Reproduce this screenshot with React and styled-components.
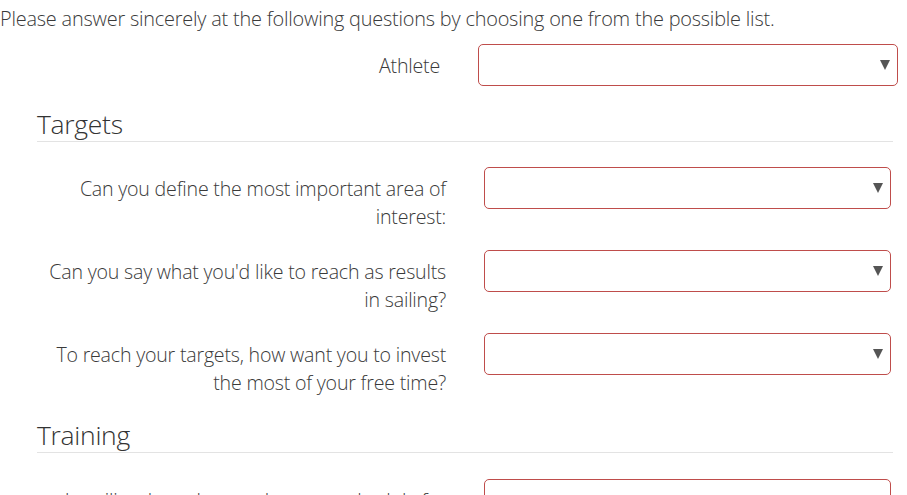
import React from "react";
import styled, { createGlobalStyle } from "styled-components";

const GlobalStyle = createGlobalStyle`
  body {
    margin: 0;
    background: #fff;
    font-family: "Open Sans", "Liberation Sans", sans-serif;
    font-weight: 300;
    color: #3a3a3a;
  }
`;

const Page = styled.div`
  width: 907px;
  height: 495px;
  overflow: hidden;
`;

const Intro = styled.p`
  margin: 0;
  padding-top: 6px;
  font-size: 19.9px;
  line-height: 26px;
  letter-spacing: -0.2px;
  white-space: nowrap;
`;

const FieldRow = styled.div`
  display: grid;
  grid-template-columns: ${(p) => p.labelWidth}px ${(p) => p.selectWidth}px;
  column-gap: 38px;
  align-items: start;
  margin-top: ${(p) => p.top}px;
`;

const Label = styled.label`
  text-align: right;
  font-size: 19.6px;
  line-height: 28px;
  padding-top: 8px;
  letter-spacing: -0.2px;
  white-space: nowrap;
`;

const SelectBox = styled.div`
  position: relative;
  height: 42px;
  box-sizing: border-box;
  border: 1.5px solid #bf4d4b;
  border-radius: 5px;
  background: #fff;
`;

const Arrow = styled.span`
  position: absolute;
  right: 7px;
  top: 15px;
  width: 0;
  height: 0;
  border-left: 5px solid transparent;
  border-right: 5px solid transparent;
  border-top: 10px solid #555;
`;

const Section = styled.section`
  padding: 0 14px 0 37px;
`;

const SectionTitle = styled.h3`
  margin: ${(p) => p.top}px 0 0;
  font-size: 26.5px;
  font-weight: 300;
  line-height: 34px;
  padding-bottom: 0;
  border-bottom: 1px solid #e3e3e3;
  color: #333;
  letter-spacing: -0.3px;
`;

const Select = () => (
  <SelectBox>
    <Arrow />
  </SelectBox>
);

const targets = [
  ["Can you define the most important area of", "interest:"],
  ["Can you say what you'd like to reach as results", "in sailing?"],
  ["To reach your targets, how want you to invest", "the most of your free time?"],
];

export default function App() {
  return (
    <Page>
      <GlobalStyle />
      <Intro>
        Please answer sincerely at the following questions by choosing one from the possible list.
      </Intro>
      <FieldRow labelWidth={440} selectWidth={420} top={12}>
        <Label>Athlete</Label>
        <Select />
      </FieldRow>
      <Section>
        <SectionTitle top={21}>Targets</SectionTitle>
        {targets.map((t, i) => (
          <FieldRow key={i} labelWidth={409} selectWidth={407} top={i === 0 ? 25 : 19}>
            <Label>
              {t[0]}
              <br />
              {t[1]}
            </Label>
            <Select />
          </FieldRow>
        ))}
        <SectionTitle top={21}>Training</SectionTitle>
        <FieldRow labelWidth={409} selectWidth={407} top={26}>
          <Label>
            In sailing, how do you plan your schedule for
            <br />
            the next season?
          </Label>
          <Select />
        </FieldRow>
      </Section>
    </Page>
  );
}
